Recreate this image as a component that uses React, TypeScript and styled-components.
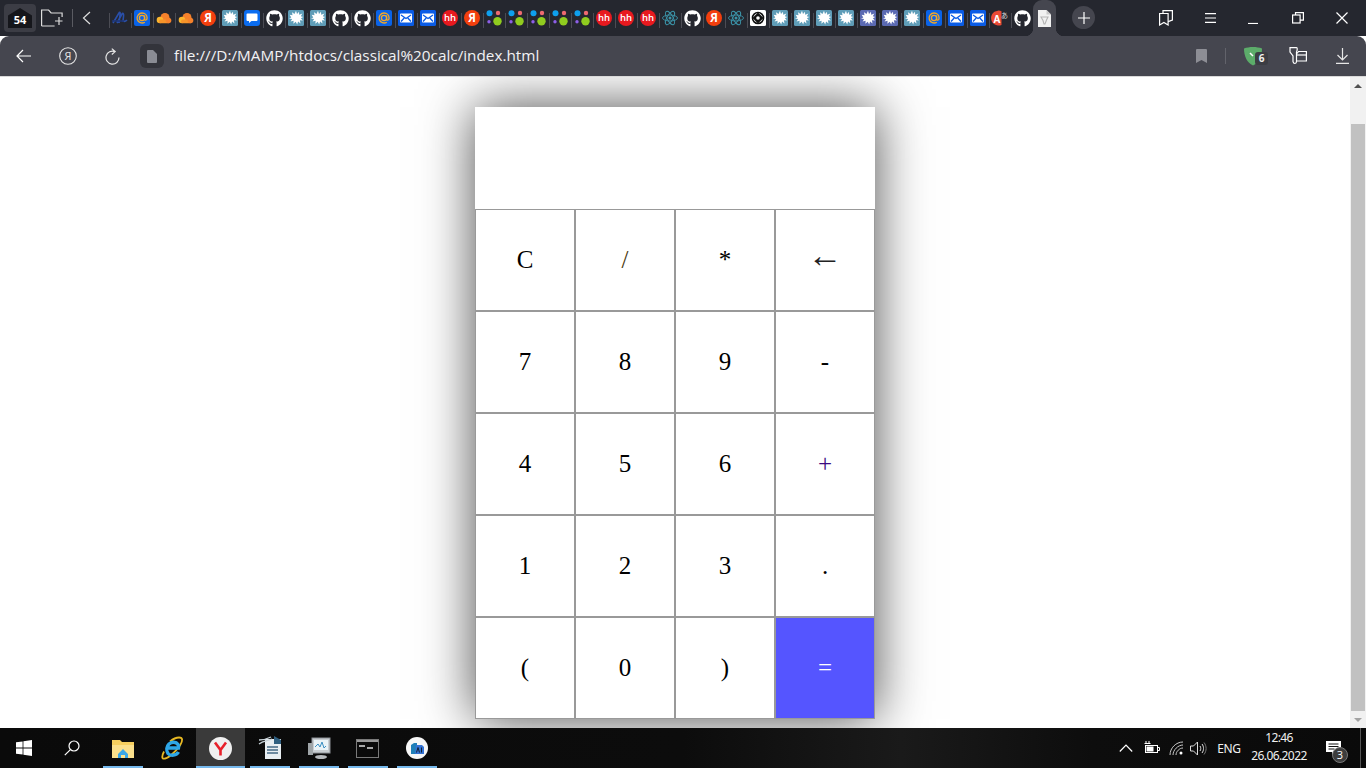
import React from "react";
import styled, { createGlobalStyle } from "styled-components";
import { FaGithub } from "react-icons/fa";

const Global = createGlobalStyle`
  html, body { margin: 0; padding: 0; height: 100%; overflow: hidden; background: #fff; }
  * { box-sizing: border-box; }
`;

const Screen = styled.div`
  width: 1366px; height: 768px; display: flex; flex-direction: column; overflow: hidden;
  font-family: "Open Sans", "Noto Sans", sans-serif;
`;

/* ---------- tab strip ---------- */
const TabStrip = styled.div`
  height: 36px; flex: none; display: flex; align-items: flex-start; background: #25272f; color: #fff;
`;
const StripLeft = styled.div`
  width: 109px; flex: none; height: 36px; display: flex; align-items: center; padding-left: 4px;
`;
const HomeChip = styled.div`
  width: 32px; height: 28px; border-radius: 4px; background: #3c3d45; position: relative;
  display: flex; align-items: center; justify-content: center; margin-right: 5px;
  svg { position: absolute; left: 4px; top: 4px; }
`;
const HomeCount = styled.span`
  position: relative; font-size: 11px; font-weight: 700; color: #fff; margin-top: 2px;
`;
const StripDivider = styled.div`
  width: 1px; height: 18px; background: #5a5b62; margin: 0 9px 0 9px;
`;
const FavTab = styled.div<{ $active?: boolean }>`
  width: ${(p) => (p.$active ? 23 : 22)}px; height: 36px; flex: none; position: relative;
  display: flex; align-items: center; justify-content: center;
  background: ${(p) => (p.$active ? "#45464f" : "transparent")};
  border-radius: ${(p) => (p.$active ? "9px 9px 0 0" : "0")};
  &::before {
    content: ""; position: absolute; left: 0; top: 13px; width: 1px; height: 15px;
    background: ${(p) => (p.$active ? "transparent" : "#4b4c54")};
  }
`;
const TabFlare = styled.span<{ $side: "left" | "right" }>`
  position: absolute; bottom: 0; width: 8px; height: 8px;
  ${(p) => p.$side}: -8px;
  background: radial-gradient(circle at ${(p) => (p.$side === "right" ? "100% 0" : "0 0")}, transparent 8px, #45464f 8.5px);
`;
const NewTab = styled.div`
  width: 23px; height: 23px; border-radius: 50%; background: #45464f; margin: 6px 0 0 16px; flex: none;
  display: flex; align-items: center; justify-content: center;
`;
const WindowControls = styled.div`
  margin-left: auto; display: flex; padding-right: 2px; height: 36px;
`;
const WindowButton = styled.div`
  width: 44px; height: 36px; display: flex; align-items: center; justify-content: center;
`;

/* ---------- toolbar ---------- */
const Toolbar = styled.div`
  height: 41px; flex: none; background: #45464f; border-bottom: 1px solid #d9d9d9; padding-left: 2px;
  border-radius: 9px 9px 0 0; display: flex; align-items: center; color: #fff;
`;
const ToolSlot = styled.div`
  width: 44px; height: 40px; flex: none; display: flex; align-items: center; justify-content: center;
`;
const FileChip = styled.div`
  width: 24px; height: 24px; border-radius: 6px; background: #33343b; flex: none; margin: 0 10px 0 6px;
  display: flex; align-items: center; justify-content: center;
`;
const Url = styled.div`
  font-size: 15.3px; color: #f2f2f4; white-space: nowrap; position: relative; top: -1px;
`;
const ToolRight = styled.div`
  margin-left: auto; display: flex; align-items: center; padding-right: 2px;
`;
const ToolSep = styled.div`
  width: 1px; height: 16px; background: #62636b; margin: 0 6px 0 2px;
`;
const ShieldWrap = styled.div`
  width: 44px; height: 40px; position: relative; display: flex; align-items: center; justify-content: center;
  padding-right: 3px;
`;
const ShieldBadge = styled.span`
  position: absolute; left: 23px; top: 16px; width: 13px; height: 13px; border-radius: 3px;
  background: #3c3d43; color: #f0f0f0; font-size: 10px; font-weight: 700; line-height: 13px; text-align: center;
`;

/* ---------- page ---------- */
const Viewport = styled.div`
  height: 651px; flex: none; display: flex; background: #fff; overflow: hidden;
`;
const Page = styled.main`
  flex: 1; display: flex; justify-content: center; align-items: flex-start; padding-top: 30px;
`;
const Calculator = styled.div`
  width: 400px; background: #fff; box-shadow: 0 0 50px rgba(0, 0, 0, 0.7);
  font-family: "Liberation Serif", "Times New Roman", serif;
`;
const Display = styled.div`
  height: 102px; background: #fff;
`;
const Keys = styled.div`
  display: grid; grid-template-columns: repeat(4, 100px); grid-auto-rows: 102px;
`;
const Key = styled.button<{ $primary?: boolean; $tint?: string }>`
  border: 1px solid #999; margin: 0; padding: 0; font-family: inherit; font-size: 25px;
  background: ${(p) => (p.$primary ? "#5555ff" : "#fff")};
  color: ${(p) => (p.$primary ? "#fff" : p.$tint || "#000")};
  display: flex; align-items: center; justify-content: center;
`;
const ArrowGlyph = styled.span`
  font-size: 35px; line-height: 1; padding-bottom: 10px; color: #222;
`;
const Scrollbar = styled.div`
  width: 16px; flex: none; background: #f1f1f1; display: flex; flex-direction: column; align-items: center;
`;
const ScrollArrow = styled.div<{ $down?: boolean }>`
  height: 17px; width: 16px; flex: none; display: flex; align-items: center; justify-content: center;
  &::after {
    content: ""; border-left: 4px solid transparent; border-right: 4px solid transparent;
    ${(p) => (p.$down ? "border-top: 4px solid #a3a3a3;" : "border-bottom: 4px solid #505050;")}
  }
`;
const ScrollTrack = styled.div`
  flex: 1; width: 100%; padding: 30px 1px 0;
`;
const ScrollThumb = styled.div`
  height: 587px; background: #c1c1c1;
`;

/* ---------- taskbar ---------- */
const Taskbar = styled.footer`
  height: 40px; flex: none; display: flex; align-items: center; color: #fff;
  background: linear-gradient(90deg, #0a0a0a 0%, #0c0c0c 50%, #1a1a1a 66%, #0d0d0d 80%, #0a0a0a 100%);
`;
const StartButton = styled.div`
  width: 48px; height: 40px; flex: none; display: flex; align-items: center; justify-content: center;
`;
const TaskSlot = styled.div<{ $active?: boolean; $open?: boolean; $first?: boolean }>`
  width: 49px; height: 40px; flex: none; position: relative; display: flex; align-items: center; justify-content: center;
  margin-left: ${(p) => (p.$first ? 2 : 0)}px;
  background: ${(p) => (p.$active ? "#3a3a3a" : "transparent")};
  &::after {
    content: ""; position: absolute; bottom: 0; height: 2px; background: #76b9ed;
    left: ${(p) => (p.$active ? 0 : 5)}px; right: ${(p) => (p.$active ? 0 : 4)}px;
    display: ${(p) => (p.$open ? "block" : "none")};
  }
`;
const Tray = styled.div`
  margin-left: auto; display: flex; align-items: center; height: 40px;
`;
const TrayIcon = styled.div<{ $w: number }>`
  width: ${(p) => p.$w}px; height: 40px; flex: none; display: flex; align-items: center; justify-content: center;
`;
const Lang = styled.div`
  width: 38px; margin-left: 3px; font-size: 12px; text-align: center; color: #f0f0f0;
  font-family: "Noto Sans", sans-serif; letter-spacing: -0.3px;
`;
const Clock = styled.div`
  width: 72px; margin-left: -5px; font-size: 12px; line-height: 18px; text-align: center; color: #f0f0f0;
  letter-spacing: -0.6px; font-family: "Noto Sans", sans-serif; margin-top: -3px;
`;
const Notif = styled.div`
  width: 44px; height: 40px; margin-left: -4px; margin-right: 5px; position: relative;
  display: flex; align-items: center; justify-content: center;
`;
const NotifBadge = styled.span`
  position: absolute; left: 21px; top: 19px; width: 16px; height: 16px; border-radius: 50%;
  background: #3d3d3d; border: 1px solid #777; color: #fff; font-size: 11px; line-height: 14px; text-align: center;
`;
const ShowDesktop = styled.div`
  width: 6px; height: 40px; border-left: 1px solid #555;
`;

/* ---------- favicons ---------- */
const Blot = ({ bg = "#5f9db8" }: { bg?: string }) => (
  <svg width="16" height="16" viewBox="0 0 16 16">
    <rect width="16" height="16" rx="1.500" fill={bg} />
    <path d="M8 .8l1 3.200 2-2.200.2 3 3.200-1.200-1.600 2.600 2.400.8-2.300 1.200 2 2.400-3-.4.600 3.200-2.400-1.800-.9 3-1.500-2.800-2.300 2 .2-3.100-3 .8 1.600-2.500L1 8.600l2.300-1.200L1.600 4.800l2.900.5-.5-3.100 2.500 1.800z" fill="#fff" />
  </svg>
);
const MailAt = () => (
  <svg width="16" height="16" viewBox="0 0 16 16">
    <rect width="16" height="16" rx="2" fill="#0a63e8" />
    <circle cx="8" cy="8" r="2.600" fill="none" stroke="#f7a823" strokeWidth="1.300" />
    <path d="M10.600 5.500v3.500c0 1.800 2.500 1.500 2.500-1 0-3-2.200-5-5.100-5a5 5 0 1 0 2.800 9.200" fill="none" stroke="#f7a823" strokeWidth="1.300" />
  </svg>
);
const Cloud = () => (
  <svg width="16" height="16" viewBox="0 0 16 16">
    <circle cx="9" cy="7.500" r="4.500" fill="#f6812b" />
    <circle cx="4" cy="10" r="3.300" fill="#fbb62f" />
    <rect x="3" y="9.500" width="11" height="3.800" rx="1.900" fill="#f79429" />
    <circle cx="12.500" cy="10.500" r="2.800" fill="#f6812b" />
  </svg>
);
const Ya = () => (
  <svg width="16" height="16" viewBox="0 0 16 16">
    <circle cx="8" cy="8" r="8" fill="#f33f0e" />
    <text x="8" y="12" textAnchor="middle" fontSize="11.500" fontWeight="700" fontFamily="Open Sans, sans-serif" fill="#fff">Я</text>
  </svg>
);
const Msg = () => (
  <svg width="16" height="16" viewBox="0 0 16 16">
    <rect width="16" height="16" rx="3" fill="#0a6cf0" />
    <path d="M3.500 3.500h9a1 1 0 0 1 1 1v5.500a1 1 0 0 1-1 1h-5L5 13v-2H3.500a1 1 0 0 1-1-1V4.500a1 1 0 0 1 1-1z" fill="#fff" />
  </svg>
);
const Mail = () => (
  <svg width="16" height="16" viewBox="0 0 16 16">
    <rect width="16" height="16" rx="1.500" fill="#0a5ce6" />
    <rect x="2" y="3.500" width="12" height="9" rx="1" fill="#fff" />
    <path d="M3 5l5 3.500L13 5M3 11.500l3.200-3.500M13 11.500L9.800 8" fill="none" stroke="#0a5ce6" strokeWidth="1.300" />
  </svg>
);
const HH = () => (
  <svg width="16" height="16" viewBox="0 0 16 16">
    <circle cx="8" cy="8" r="8" fill="#e8191f" />
    <text x="8" y="11.300" textAnchor="middle" fontSize="9.500" fontWeight="600" fontFamily="Open Sans, sans-serif" fill="#fff">hh</text>
  </svg>
);
const Dots = () => (
  <svg width="16" height="16" viewBox="0 0 16 16">
    <circle cx="3.500" cy="3.200" r="3" fill="#0ea0ee" />
    <circle cx="12" cy="3" r="2.200" fill="#ee6a70" />
    <circle cx="3" cy="11.800" r="1.700" fill="#8d5fe8" />
    <circle cx="11.500" cy="11.300" r="4.200" fill="#90cc1f" />
  </svg>
);
const ReactLogo = () => (
  <svg width="16" height="16" viewBox="0 0 16 16" fill="none" stroke="#3b93a8" strokeWidth="0.900">
    <ellipse cx="8" cy="8" rx="7.500" ry="3" />
    <ellipse cx="8" cy="8" rx="7.500" ry="3" transform="rotate(60 8 8)" />
    <ellipse cx="8" cy="8" rx="7.500" ry="3" transform="rotate(120 8 8)" />
    <circle cx="8" cy="8" r="1.500" fill="#3b93a8" stroke="none" />
  </svg>
);
const Target = () => (
  <svg width="16" height="16" viewBox="0 0 16 16">
    <rect width="16" height="16" rx="1.500" fill="#fff" />
    <circle cx="8" cy="8" r="5.500" fill="none" stroke="#111" strokeWidth="1.600" />
    <path d="M8 2.500L13.500 8 8 13.500 2.500 8z" fill="#111" />
    <circle cx="8" cy="8" r="1.800" fill="#fff" />
  </svg>
);
const Translate = () => (
  <svg width="18" height="16" viewBox="0 0 18 16">
    <path d="M10.500 1.200A7.500 7.500 0 1 0 10.500 15z" fill="#ea4a35" />
    <text x="6" y="13" textAnchor="middle" fontSize="10" fontWeight="700" fontFamily="Open Sans, sans-serif" fill="#fff">A</text>
    <text x="13.500" y="7.500" textAnchor="middle" fontSize="7" fontFamily="Noto Sans CJK JP, sans-serif" fill="#ddd">あ</text>
  </svg>
);
const Scribble = () => (
  <svg width="16" height="16" viewBox="0 0 16 16" fill="none" stroke="#2a4fa8" strokeWidth="1.600">
    <path d="M1 13L7 3c1-1.500 1.500 0 1 2L7 13M5 13l5-9c1-1.500 2 0 1.500 2.500L11 11c2 1 3 0 4-1" />
    <path d="M0 11h12" stroke="#1d3576" />
  </svg>
);
const DocFav = () => (
  <svg width="13" height="17" viewBox="0 0 13 17">
    <path d="M0 0h8.500L13 4.500V17H0z" fill="#f1f1f1" />
    <path d="M8.500 0L13 4.500H8.500z" fill="#c9c9c9" />
    <path d="M3 7h7L8.500 10 7 14H6L5 10.500z" fill="none" stroke="#b5b5b5" strokeWidth="1.100" />
  </svg>
);
const Github = () => <FaGithub size={17} color="#fff" />;

const B = () => <Blot />;
const P = () => <Blot bg="#5b6ab3" />;

const favicons: React.FC[] = [
  Scribble, MailAt, Cloud, Cloud, Ya, B, Msg, Github, B, B, Github, Github, MailAt, Mail, Mail, HH, Ya,
  Dots, Dots, Dots, Dots, Dots, HH, HH, HH, ReactLogo, Github, Ya, ReactLogo, Target, B, B, B, B, P, P, B,
  MailAt, Mail, Mail, Translate, Github,
];

const keys = ["C", "/", "*", "←", "7", "8", "9", "-", "4", "5", "6", "+", "1", "2", "3", ".", "(", "0", ")", "="];
const tints: Record<string, string> = { "+": "#3a0a80", "/": "#4a3a10" };

const line = { fill: "none", stroke: "#fff", strokeWidth: 1.2 } as const;

export default function App() {
  return (
    <Screen>
      <Global />
      <TabStrip>
        <StripLeft>
          <HomeChip>
            <svg width="24" height="20" viewBox="0 0 24 20"><path d="M12 0l12 7.500V20H0V7.500z" fill="#15161b" /></svg>
            <HomeCount>54</HomeCount>
          </HomeChip>
          <svg width="22" height="18" viewBox="0 0 22 18" {...line} stroke="#ddd">
            <path d="M.6 17V1h7l2.500 3h11v4M.6 17h13M18 8v8M14 12h7.500" />
          </svg>
          <StripDivider />
          <svg width="9" height="14" viewBox="0 0 9 14" {...line} stroke="#ddd"><path d="M8 1L1.500 7 8 13" /></svg>
        </StripLeft>
        {favicons.map((Icon, i) => (
          <FavTab key={i}><Icon /></FavTab>
        ))}
        <FavTab $active>
          <TabFlare $side="left" />
          <DocFav />
          <TabFlare $side="right" />
        </FavTab>
        <NewTab>
          <svg width="12" height="12" viewBox="0 0 12 12" {...line}><path d="M6 0v12M0 6h12" /></svg>
        </NewTab>
        <WindowControls>
          <WindowButton>
            <svg width="14" height="16" viewBox="0 0 14 16" {...line}>
              <path d="M.6 3.500h8.500v11.500l-4.200-2.500L.6 15z" /><path d="M4 3.500V.6h9.400v9.500l-4.300 1.500" />
            </svg>
          </WindowButton>
          <WindowButton>
            <svg width="11" height="10" viewBox="0 0 11 10" {...line}><path d="M0 .6h11M0 5h11M0 9.400h11" /></svg>
          </WindowButton>
          <WindowButton>
            <svg width="12" height="12" viewBox="0 0 12 12" {...line}><path d="M0 11.500h10" /></svg>
          </WindowButton>
          <WindowButton>
            <svg width="12" height="12" viewBox="0 0 12 12" {...line}>
              <rect x=".6" y="3" width="7.500" height="8" /><path d="M3.500 3V.6h7.900v7.500H8" />
            </svg>
          </WindowButton>
          <WindowButton>
            <svg width="12" height="12" viewBox="0 0 12 12" {...line}><path d="M.5.500l11 11M11.500.500l-11 11" /></svg>
          </WindowButton>
        </WindowControls>
      </TabStrip>

      <Toolbar>
        <ToolSlot>
          <svg width="16" height="14" viewBox="0 0 16 14" {...line}><path d="M15 7H1M7 1L1 7l6 6" /></svg>
        </ToolSlot>
        <ToolSlot>
          <svg width="18" height="18" viewBox="0 0 18 18">
            <circle cx="9" cy="9" r="8.300" fill="none" stroke="#e6e6e6" strokeWidth="1.100" />
            <text x="9" y="13" textAnchor="middle" fontSize="11" fontFamily="Open Sans, sans-serif" fill="#e6e6e6">Я</text>
          </svg>
        </ToolSlot>
        <ToolSlot>
          <svg width="15" height="17" viewBox="0 0 15 17" {...line} stroke="#e6e6e6">
            <path d="M10 3.600A6.500 6.500 0 1 0 14 9.500M6.800.6L10.200 3.600 6.800 6.500" />
          </svg>
        </ToolSlot>
        <FileChip>
          <svg width="10" height="13" viewBox="0 0 10 13"><path d="M0 1a1 1 0 0 1 1-1h5l4 4v8a1 1 0 0 1-1 1H1a1 1 0 0 1-1-1z" fill="#8a8c94" /></svg>
        </FileChip>
        <Url>file:///D:/MAMP/htdocs/classical%20calc/index.html</Url>
        <ToolRight>
          <ToolSlot>
            <svg width="11" height="14" viewBox="0 0 11 14"><path d="M0 1a1 1 0 0 1 1-1h9a1 1 0 0 1 1 1v13l-5.500-3L0 14z" fill="#8d8e95" /></svg>
          </ToolSlot>
          <ToolSep />
          <ShieldWrap>
            <svg width="20" height="20" viewBox="0 0 20 20">
              <path d="M1 2.500c5-2 13-2 18 0 0 8-3 14-9 17-6-3-9-9-9-17z" fill="#5cac6a" />
              <path d="M7 7l3 3" stroke="#fff" strokeWidth="1.500" />
            </svg>
            <ShieldBadge>6</ShieldBadge>
          </ShieldWrap>
          <ToolSlot>
            <svg width="18" height="18" viewBox="0 0 18 18" {...line}>
              <path d="M1 .6h6.500c1 0 1 2 0 4.500v9.500c0 2.500-3 2.500-3.500 0V9L1 5z" /><path d="M8 6.500L9.500 4.500h7.900v9.500H8" /><path d="M8 8h9.500" />
            </svg>
          </ToolSlot>
          <ToolSlot>
            <svg width="13" height="16" viewBox="0 0 13 16" {...line} stroke="#e6e6e6"><path d="M6.500 0v12M1.500 7l5 5 5-5M0 15.300h13" /></svg>
          </ToolSlot>
        </ToolRight>
      </Toolbar>

      <Viewport>
        <Page>
          <Calculator>
            <Display />
            <Keys>
              {keys.map((k) => (
                <Key key={k} $primary={k === "="} $tint={tints[k]}>
                  {k === "←" ? <ArrowGlyph>{k}</ArrowGlyph> : k}
                </Key>
              ))}
            </Keys>
          </Calculator>
        </Page>
        <Scrollbar>
          <ScrollArrow />
          <ScrollTrack><ScrollThumb /></ScrollTrack>
          <ScrollArrow $down />
        </Scrollbar>
      </Viewport>

      <Taskbar>
        <StartButton>
          <svg width="16" height="16" viewBox="0 0 16 16"><path d="M0 2.300l6.600-.9v6.200H0zM7.400 1.300L16 0v7.600H7.400zM0 8.400h6.600v6.200L0 13.700zM7.400 8.400H16V16l-8.600-1.300z" fill="#fff" /></svg>
        </StartButton>
        <StartButton>
          <svg width="16" height="16" viewBox="0 0 16 16" fill="none" stroke="#fff" strokeWidth="1.200"><circle cx="10" cy="6" r="5" /><path d="M6.400 9.600L.8 15.200" /></svg>
        </StartButton>
        <TaskSlot $open $first>
          <svg width="22" height="19" viewBox="0 0 22 19">
            <path d="M0 1h8l2 2h12v16H0z" fill="#f6cf5f" /><path d="M0 6h22v13H0z" fill="#fbe08c" />
            <path d="M6 15l5-5 5 5v4h-3v-3H9v3H6z" fill="#3aa6e6" />
          </svg>
        </TaskSlot>
        <TaskSlot>
          <svg width="24" height="24" viewBox="0 0 24 24" fill="none">
            <path d="M4 15.500c-2 4-3 8 1 7 3-.5 10-6 15-13 3-5 3-8-1-8-2.500 0-6 1.500-9 4" stroke="#e8b923" strokeWidth="1.800" />
            <path d="M18.500 16c-2 3.500-8 4.500-10.500 1.500-2-3-1.500-7 1-9.500 3-2.500 7-2.500 9 .5 .8 1.200 .8 2.500 .5 3.500H8" stroke="#2ea7e8" strokeWidth="3.400" />
          </svg>
        </TaskSlot>
        <TaskSlot $active $open>
          <svg width="23" height="23" viewBox="0 0 23 23">
            <circle cx="11.500" cy="11.500" r="11.500" fill="#efefef" />
            <path d="M6 5.500l5.500 7.500v5.500M17 5.500L11.500 13" fill="none" stroke="#e8202a" strokeWidth="2.600" />
          </svg>
        </TaskSlot>
        <TaskSlot $open>
          <svg width="24" height="24" viewBox="0 0 24 24">
            <path d="M7 3h11l5 0v20H7z" fill="#e8eef2" /><path d="M16 0l7 4v4h-7z" fill="#2f5f80" />
            <path d="M9 11h11M9 14h11M9 17h11" stroke="#446a85" strokeWidth="1.300" />
            <path d="M1 8c4-3 8-3 13-5M1 4c4 0 8-1 12-3" stroke="#c9d4da" strokeWidth="1.300" fill="none" />
          </svg>
        </TaskSlot>
        <TaskSlot $open>
          <svg width="24" height="22" viewBox="0 0 24 22">
            <rect x="5" y="1" width="18" height="15" fill="#c9ced2" stroke="#8b9095" />
            <rect x="7" y="3" width="14" height="10" fill="#eaf3f7" />
            <path d="M8 10l3-3 2 3 2-5 2 6 2-2" stroke="#3b8fc2" fill="none" />
            <rect x="1" y="6" width="5" height="12" fill="#9fa5a8" /><ellipse cx="14" cy="20" rx="6" ry="2" fill="#b6babd" />
          </svg>
        </TaskSlot>
        <TaskSlot $open>
          <svg width="23" height="19" viewBox="0 0 23 19">
            <rect x=".5" y=".5" width="22" height="18" fill="#0b0b0b" stroke="#7a7a7a" />
            <rect x="1" y="1" width="21" height="2" fill="#999" />
            <path d="M3 7h6M11 9h6" stroke="#ddd" strokeWidth="1.500" />
          </svg>
        </TaskSlot>
        <TaskSlot $open>
          <svg width="22" height="22" viewBox="0 0 22 22">
            <circle cx="11" cy="11" r="11" fill="#f7f7f7" />
            <path d="M5 8l3-2h3v11H5z" fill="#1f7fb8" /><path d="M10 8h6l2 2v7H9z" fill="#3573d4" />
            <path d="M10.500 15.500l1.500-5 1.500 5M15.500 10.500v5" stroke="#123" strokeWidth="1" fill="none" />
          </svg>
        </TaskSlot>
        <Tray>
          <TrayIcon $w={26}>
            <svg width="14" height="8" viewBox="0 0 14 8" fill="none" stroke="#fff" strokeWidth="1.200"><path d="M.8 7.500L7 1l6.200 6.500" /></svg>
          </TrayIcon>
          <TrayIcon $w={24}>
            <svg width="17" height="14" viewBox="0 0 17 14" fill="none" stroke="#fff">
              <rect x="2.500" y="4.500" width="12" height="7" /><rect x="3.500" y="5.500" width="7" height="5" fill="#fff" stroke="none" />
              <path d="M15 6.500h1.500v3H15M3 0v2.500M6 0v2.500M1.500 2.500h6" />
            </svg>
          </TrayIcon>
          <TrayIcon $w={26}>
            <svg width="15" height="15" viewBox="0 0 15 15" fill="none" stroke="#c8c8c8" strokeWidth="1">
              <path d="M1 14C1 7 7 1 14 1M4 14c0-5 5-10 10-10M7 14c0-3.500 3.500-7 7-7" /><circle cx="12" cy="12" r="1.500" fill="#fff" stroke="none" />
            </svg>
          </TrayIcon>
          <TrayIcon $w={18}>
            <svg width="17" height="15" viewBox="0 0 17 15" fill="none" stroke="#ddd">
              <path d="M.5 5h3L7.500 1v13l-4-4h-3z" /><path d="M10 5c1 1.500 1 3.500 0 5M12 3c2 2.500 2 6.500 0 9" /><path d="M14 1.500c2.800 3.500 2.800 8.500 0 12" stroke="#777" />
            </svg>
          </TrayIcon>
          <Lang>ENG</Lang>
          <Clock>12:46<br />26.06.2022</Clock>
          <Notif>
            <svg width="15" height="14" viewBox="0 0 15 14"><path d="M0 0h15v11H9l-3 3v-3H0z" fill="#fff" /><path d="M2.500 3h10M2.500 5.500h10M2.500 8h6" stroke="#111" /></svg>
            <NotifBadge>3</NotifBadge>
          </Notif>
          <ShowDesktop />
        </Tray>
      </Taskbar>
    </Screen>
  );
}
